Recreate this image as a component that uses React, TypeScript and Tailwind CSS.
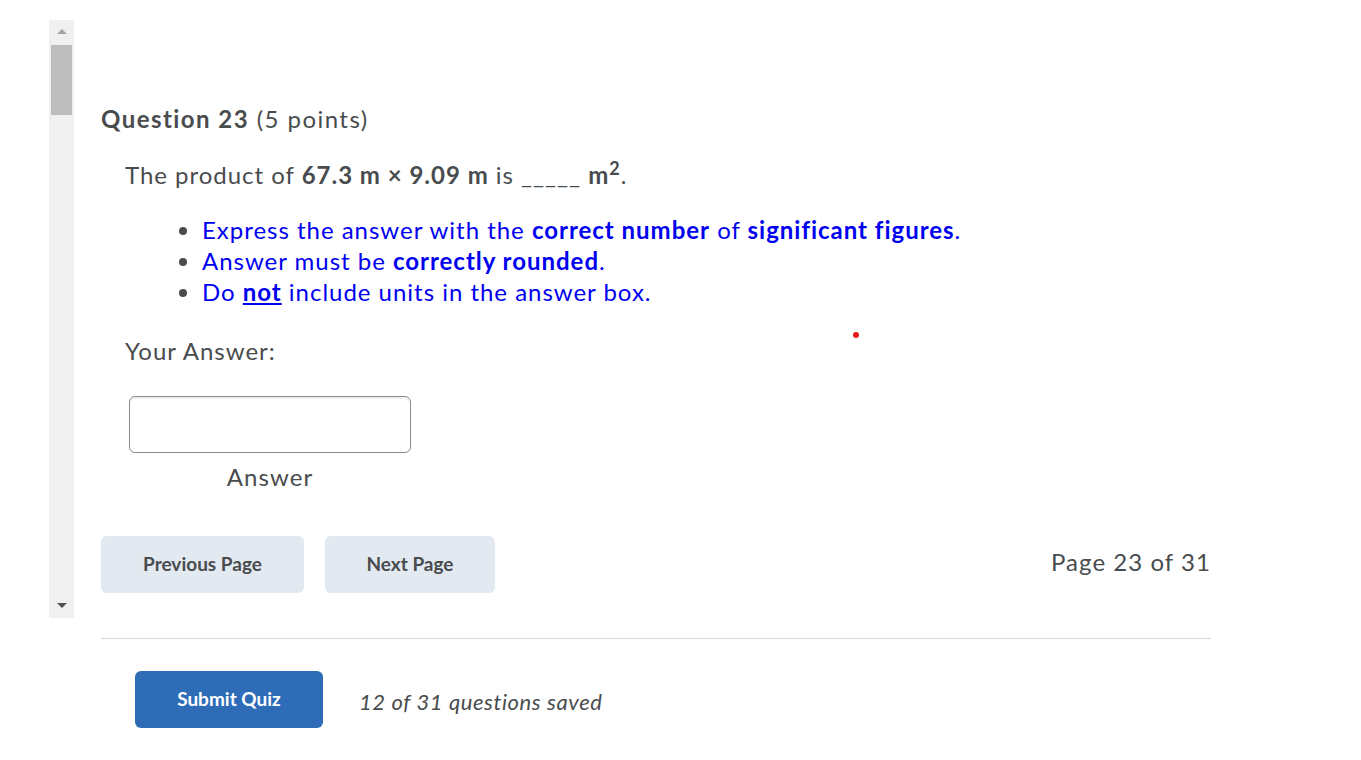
import React from 'react';

export default function App() {
  return (
    <div className="relative min-h-screen bg-white font-['Lato','Open_Sans',sans-serif] text-[#494c4e] [font-variant-ligatures:none]">
      <div className="flex items-start">
        {/* Scrollbar */}
        <div className="ml-[49px] mt-[20px] flex h-[598px] w-[25px] flex-col items-center bg-[#f0f0f0]">
          <div className="mt-[9px] h-0 w-0 border-x-[5px] border-b-[5px] border-x-transparent border-b-[#a3a3a3]" />
          <div className="mt-[11px] h-[70px] w-[21px] bg-[#bdbdbd]" />
          <div className="flex-1" />
          <div className="mb-[10px] h-0 w-0 border-x-[5px] border-t-[5px] border-x-transparent border-t-[#505050]" />
        </div>

        {/* Content */}
        <div className="ml-[27px] w-[1110px] pt-[101px]">
          <h2 className="text-[24px] leading-[36px] tracking-[1.45px]">
            <span className="font-bold">Question 23</span> (5 points)
          </h2>

          <div className="pl-[24px] tracking-[0.98px]">
            <p className="mt-[20px] text-[24px] leading-[36px]">
              The product of <b>67.3 m × 9.09 m</b> is _____ <b>m<sup className="text-[18px]">2</sup></b>.
            </p>

            <ul className="mt-[21px] list-disc pl-[77px] text-[24px] leading-[31px] text-[#0000f0] marker:text-[#494c4e]">
              <li>
                Express the answer with the <b>correct number</b> of <b>significant figures</b>.
              </li>
              <li>
                Answer must be <b>correctly rounded</b>.
              </li>
              <li>
                Do <b className="underline">not</b> include units in the answer box.
              </li>
            </ul>

            <p className="mt-[26px] text-[24px] leading-[36px]">Your Answer:</p>

            <div className="ml-[4px] mt-[27px] w-[282px]">
              <input
                type="text"
                className="h-[57px] w-full rounded-[6px] border border-[#8a8d90] bg-white shadow-[inset_0_2px_0_rgba(0,0,0,0.06)] outline-none"
              />
              <div className="mt-[6px] text-center text-[24px] leading-[36px] tracking-[1.1px]">Answer</div>
            </div>
          </div>

          <div className="mt-[41px] flex items-center">
            <button className="h-[57px] w-[203px] rounded-[6px] bg-[#e3e9f1] text-[19px] font-bold text-[#494c4e]">
              Previous Page
            </button>
            <button className="ml-[21px] h-[57px] w-[170px] rounded-[6px] bg-[#e3e9f1] text-[19px] font-bold text-[#494c4e]">
              Next Page
            </button>
            <div className="flex-1" />
            <span className="mb-[6px] text-[24px] leading-[36px] tracking-[1.05px]">Page 23 of 31</span>
          </div>

          <div className="mt-[45px] h-px w-full bg-[#d3d9e3]" />

          <div className="ml-[34px] mt-[32px] flex items-center">
            <button className="h-[57px] w-[188px] rounded-[6px] bg-[#2e6cb7] text-[19px] font-bold text-white">
              Submit Quiz
            </button>
            <span className="ml-[36px] mt-[4px] text-[22px] italic tracking-[0.6px]">12 of 31 questions saved</span>
          </div>
        </div>
      </div>

      {/* stray red dot */}
      <div className="absolute left-[853px] top-[332px] h-[6px] w-[6px] rounded-full bg-[#e8191a]" />
    </div>
  );
}
